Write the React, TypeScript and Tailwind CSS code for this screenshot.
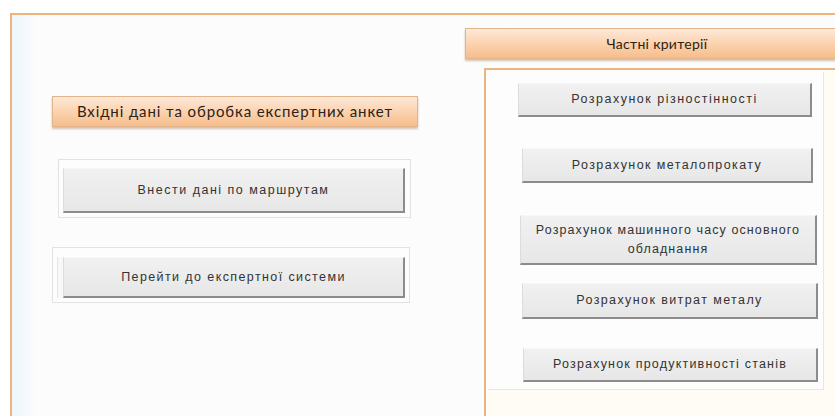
import React from "react";

const btnBase =
  "flex items-center justify-center text-center bg-gradient-to-b from-[#f1f1f1] to-[#e7e7e7] border-t border-l border-t-[#f7f7f7] border-l-[#dcdcdc] border-r-2 border-b-2 border-r-[#8c8c8c] border-b-[#8c8c8c] text-[#333333] text-[12.5px] leading-[19px] font-['Liberation_Sans',Arial,sans-serif]";

const headerBase =
  "flex items-center justify-center bg-gradient-to-b from-[#fde9d8] via-[#fbd3b0] to-[#f6bd8c] border border-[#e2b58c] shadow-[0_2px_2px_rgba(160,120,80,0.45)] text-[#2e2116] font-['Lato','Open_Sans',sans-serif]";

function RightButton({
  label,
  className,
}: {
  label: React.ReactNode;
  className: string;
}) {
  return <div className={`${btnBase} ${className}`}>{label}</div>;
}

export default function App() {
  return (
    <div className="w-[835px] h-[416px] bg-white overflow-hidden pt-[13px] pl-[10px] flex flex-col">
      {/* form frame */}
      <div className="flex-1 border-t-2 border-l-2 border-[#efb47d] bg-[linear-gradient(to_right,#eef6fa_0px,#f6fafc_18px,#fcfcfc_24px)] flex flex-row overflow-hidden">
        {/* left column: input data */}
        <div className="ml-[40px] w-[366px] flex flex-col shrink-0">
          <div className={`${headerBase} mt-[81px] h-[31px] text-[15px] tracking-[0.9px]`}>
            Вхідні дані та обробка експертних анкет
          </div>

          <div className="mt-[32px] ml-[6px] w-[353px] h-[59px] border border-[#e2e2e2] bg-[#fdfdfd] pt-[8px] pl-[4px]">
            <div className={`${btnBase} w-[342px] h-[45px] tracking-[1.5px]`}>
              Внести дані по маршрутам
            </div>
          </div>

          <div className="mt-[29px] w-[358px] h-[56px] border border-[#e2e2e2] bg-[#fdfdfd] pt-[9px] pl-[4px]">
            <div className="flex h-[41px]">
              <div className="w-[6px] bg-[#f8f8f8] border-l border-[#e6e6e6]" />
              <div className={`${btnBase} w-[342px] h-[41px] tracking-[1.4px]`}>
                Перейти до експертної системи
              </div>
            </div>
          </div>
        </div>

        {/* right column: partial criteria */}
        <div className="ml-[47px] w-[384px] shrink-0 flex flex-col">
          <div className={`${headerBase} mt-[13px] h-[31px] text-[14px] tracking-[0.3px]`}>
            Частні критерії
          </div>

          <div className="mt-[9px] ml-[19px] flex-1 border-t-2 border-l-2 border-[#e8b684] bg-[#fffcf6] pt-[2px] pl-[2px]">
            <div className="w-[336px] h-[318px] border-r border-b border-[#ebe6dc] bg-[#fdfdfd] flex flex-col">
              <RightButton
                label="Розрахунок різностінності"
                className="mt-[11px] ml-[30px] w-[294px] h-[34px] tracking-[1.5px]"
              />
              <RightButton
                label="Розрахунок металопрокату"
                className="mt-[31px] ml-[34px] w-[291px] h-[35px] tracking-[1.4px]"
              />
              <RightButton
                label={
                  <span>
                    Розрахунок машинного часу основного
                    <br />
                    обладнання
                  </span>
                }
                className="mt-[32px] ml-[32px] w-[297px] h-[50px] tracking-[1.1px]"
              />
              <RightButton
                label="Розрахунок витрат металу"
                className="mt-[18px] ml-[34px] w-[296px] h-[36px] tracking-[1.4px]"
              />
              <RightButton
                label="Розрахунок продуктивності станів"
                className="mt-[29px] ml-[35px] w-[295px] h-[34px] tracking-[1.2px]"
              />
            </div>
          </div>
        </div>
      </div>
    </div>
  );
}
